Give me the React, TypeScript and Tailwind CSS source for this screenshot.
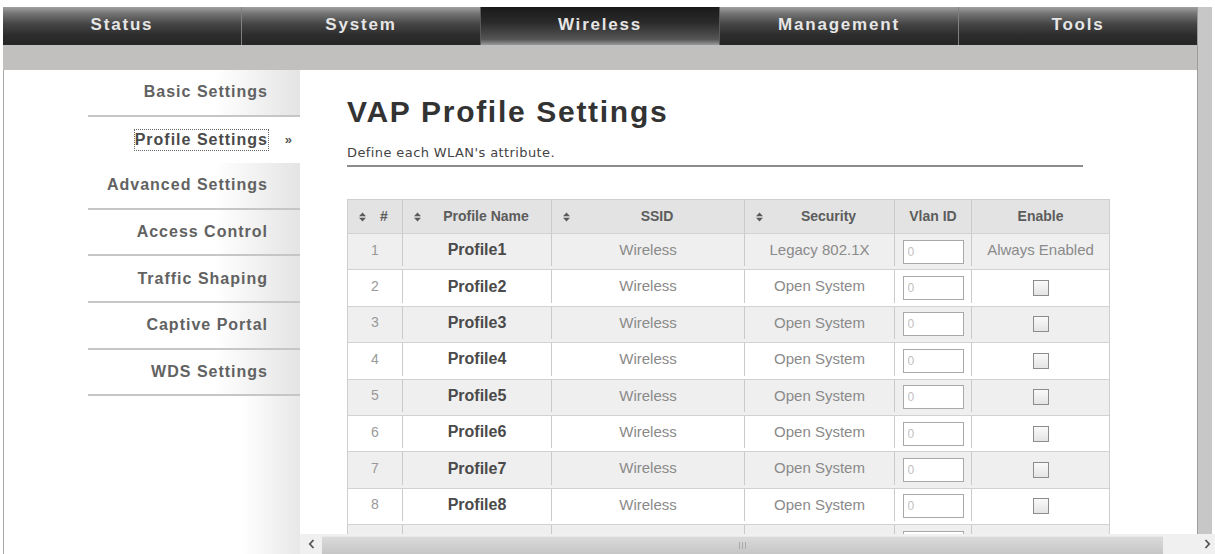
import React from 'react'

const tabs = ['Status', 'System', 'Wireless', 'Management', 'Tools']

const menu = [
  'Basic Settings',
  'Profile Settings',
  'Advanced Settings',
  'Access Control',
  'Traffic Shaping',
  'Captive Portal',
  'WDS Settings',
]

const profiles = Array.from({ length: 9 }, (_, i) => ({
  id: i + 1,
  name: `Profile${i + 1}`,
  ssid: 'Wireless',
  security: i === 0 ? 'Legacy 802.1X' : 'Open System',
}))

const cols = 'grid grid-cols-[55px_149px_193px_150px_77px_137px]'

function SortIcon() {
  return (
    <svg width="7" height="10" viewBox="0 0 7 10" className="shrink-0">
      <path d="M0 4.2 L3.5 0.5 L7 4.2 Z M0 5.8 L3.5 9.5 L7 5.8 Z" fill="#5a5a5a" />
    </svg>
  )
}

function SortHeader({ label }: { label: string }) {
  return (
    <div className="flex items-center pl-[11px] border-r border-[#cacaca]">
      <SortIcon />
      <span className="flex-1 text-center">{label}</span>
    </div>
  )
}

function Chevron({ dir }: { dir: 'left' | 'right' }) {
  return (
    <svg width="7" height="10" viewBox="0 0 7 10">
      <path
        d={dir === 'left' ? 'M5.5 1 L1.8 5 L5.5 9' : 'M1.5 1 L5.2 5 L1.5 9'}
        fill="none"
        stroke="#555"
        strokeWidth="1.8"
      />
    </svg>
  )
}

export default function App() {
  return (
    <div className="w-[1215px] h-[554px] bg-white flex flex-col overflow-hidden font-['Liberation_Sans',Arial,sans-serif]">
      <div className="flex h-[534px]">
        <div className="w-[3px]" />
        <div className="w-[1194px] flex flex-col pt-[7px]">
          {/* top tabs */}
          <div className="h-[38px] flex">
            {tabs.map((t, i) => {
              const active = t === 'Wireless'
              return (
                <div
                  key={t}
                  className={
                    'flex-1 flex items-center justify-center pb-[2px] text-[17px] font-bold tracking-[1.8px] text-[#e6e6e6] ' +
                    (active
                      ? 'bg-[linear-gradient(to_bottom,#1a1a1a_0%,#2a2a2a_40%,#555_85%,#9a9a9a_100%)] border-x border-[#5a5a5a]'
                      : 'bg-[linear-gradient(to_bottom,#a0a0a0_0%,#727272_18%,#454545_45%,#2c2c2c_75%,#262626_100%)]') +
                    (i === 0 || i === 3 ? ' border-r border-[#808080]' : '')
                  }
                >
                  {t}
                </div>
              )
            })}
          </div>
          <div className="h-[25px] bg-[#c2bfbf]" />

          <div className="flex-1 flex min-h-0 border-l border-[#a9a9a9]">
            {/* side menu */}
            <div className="w-[296px] bg-[linear-gradient(to_right,#ffffff_80%,#e8e8e8_100%)]">
              <div className="ml-[84px] flex flex-col">
                {menu.map(m => {
                  const sel = m === 'Profile Settings'
                  return (
                    <div
                      key={m}
                      className={
                        'h-[46.6px] flex items-center justify-end pr-[32px] text-[16px] font-bold tracking-[1px] ' +
                        (sel
                          ? 'bg-white text-[#4a4a4a] relative'
                          : 'bg-[linear-gradient(to_right,#ffffff_60%,#e4e4e4_100%)] text-[#626262] border-b-2 border-[#c6c6c6]')
                      }
                    >
                      {sel ? (
                        <>
                          <span className="outline outline-1 outline-dotted outline-[#666] leading-[20px]">{m}</span>
                          <span className="absolute right-[8px] text-[13px] tracking-normal text-[#555]">»</span>
                        </>
                      ) : (
                        m
                      )}
                    </div>
                  )
                })}
              </div>
            </div>

            {/* main panel */}
            <div className="flex-1 overflow-hidden pl-[47px]">
              <h1 className="pt-[25px] text-[30px] leading-[34px] font-bold tracking-[1.7px] text-[#333]">
                VAP Profile Settings
              </h1>
              <p className="mt-[16px] text-[13px] leading-[16px] tracking-[0.4px] text-[#444] font-['DejaVu_Sans',sans-serif]">
                Define each WLAN's attribute.
              </p>
              <div className="mt-[4px] h-[2px] w-[736px] bg-[#8c8c8c]" />

              <div className="mt-[32px] w-[763px] border border-[#cfcfcf]">
                <div className={cols + ' h-[33px] bg-[#e3e3e3] text-[14px] font-bold text-[#5c5c5c]'}>
                  <SortHeader label="#" />
                  <SortHeader label="Profile Name" />
                  <SortHeader label="SSID" />
                  <SortHeader label="Security" />
                  <div className="flex items-center justify-center border-r border-[#cacaca]">Vlan ID</div>
                  <div className="flex items-center justify-center">Enable</div>
                </div>

                {profiles.map(p => (
                  <div
                    key={p.id}
                    className={
                      cols +
                      ' h-[36.4px] pb-[3px] border-t border-[#d2d2d2] ' +
                      (p.id % 2 === 1 ? 'bg-[#efefef]' : 'bg-white')
                    }
                  >
                    <div className="flex items-center justify-center border-r border-[#cacaca] text-[14px] text-[#999]">
                      {p.id}
                    </div>
                    <div className="flex items-center justify-center border-r border-[#cacaca] text-[16px] font-bold text-[#4a4a4a]">
                      {p.name}
                    </div>
                    <div className="flex items-center justify-center border-r border-[#cacaca] text-[15px] text-[#8a8a8a]">
                      {p.ssid}
                    </div>
                    <div className="flex items-center justify-center border-r border-[#cacaca] text-[15px] text-[#8a8a8a]">
                      {p.security}
                    </div>
                    <div className="flex items-center justify-center border-r border-[#cacaca]">
                      <input
                        type="text"
                        placeholder="0"
                        readOnly
                        className="w-[61px] h-[24px] mt-[3px] border border-[#a9a9a9] bg-white px-[4px] text-[12px] placeholder:text-[#c0c0c0] outline-none"
                      />
                    </div>
                    <div className="flex items-center justify-center text-[15px] text-[#8a8a8a]">
                      {p.id === 1 ? (
                        'Always Enabled'
                      ) : (
                        <div className="w-[16px] h-[16px] mt-[3px] border border-[#8c8c8c] bg-[linear-gradient(to_bottom,#fafafa,#e4e4e4)]" />
                      )}
                    </div>
                  </div>
                ))}
              </div>
            </div>
          </div>
        </div>
        {/* outer vertical scrollbar track */}
        <div className="w-[15px] mt-[7px] bg-[#c7c7c7] border-l border-[#9c9c9c]" />
      </div>

      {/* bottom row: side menu continuation + horizontal scrollbar */}
      <div className="flex h-[20px]">
        <div className="w-[3px]" />
        <div className="w-[297px] border-l border-[#a9a9a9] bg-[linear-gradient(to_right,#ffffff_80%,#e8e8e8_100%)]" />
        <div className="flex-1 flex bg-[#f0f0f0]">
          <div className="w-[22px] flex items-center justify-center">
            <Chevron dir="left" />
          </div>
          <div className="w-[841px] mt-[2px] flex items-center justify-center bg-[linear-gradient(to_bottom,#dadada,#c6c6c6)] border-t border-[#e8e8e8]">
            <div className="flex gap-[2px]">
              <div className="w-[1px] h-[7px] bg-[#aaa]" />
              <div className="w-[1px] h-[7px] bg-[#aaa]" />
              <div className="w-[1px] h-[7px] bg-[#aaa]" />
            </div>
          </div>
          <div className="flex-1" />
          <div className="w-[15px] flex items-center justify-center">
            <Chevron dir="right" />
          </div>
        </div>
      </div>
    </div>
  )
}
